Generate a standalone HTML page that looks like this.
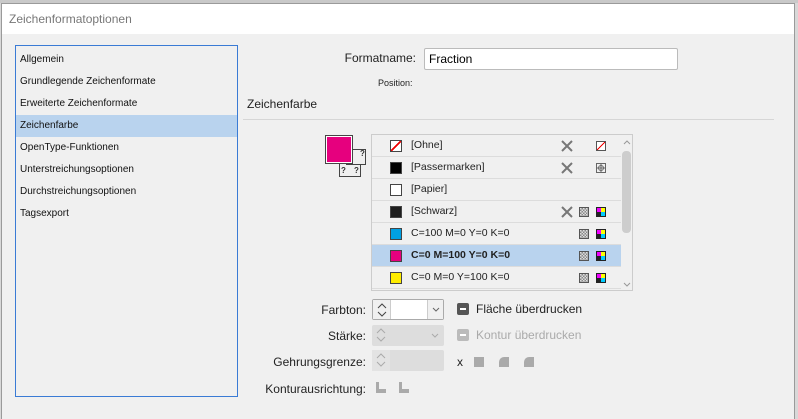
<!DOCTYPE html><html><head><style>
*{margin:0;padding:0;box-sizing:border-box}
body{width:798px;height:419px;overflow:hidden;background:#d8d8d8;font-family:"Liberation Sans",sans-serif;position:relative}
.a{position:absolute}
#dlg{left:1px;top:3px;width:794px;height:416px;background:#f0f0f0;border:1px solid #9a9a9a;border-bottom:none}
#title{left:0;top:0;width:792px;height:30px;background:#fff;color:#777;font-size:12px;padding:8px 0 0 7px}
#list{left:15px;top:45px;width:223px;height:352px;border:1px solid #3a7bd5;background:#f0f0f0}
#list div{height:22px;font-size:10px;line-height:22px;padding-left:4px;color:#111}
.lb{font-size:12px;color:#222;text-align:right}
.row{position:absolute;left:0;width:249px;height:22px;border-bottom:1px solid #dcdcdc;font-size:10.5px;line-height:21px;color:#222}
.sw{position:absolute;left:18px;top:5px;width:12px;height:12px;border:1px solid #444}
.row span{position:absolute;left:39px}
.ic{position:absolute;top:6px;width:10px;height:10px}
.g{left:207px;border:1px solid #555;background:repeating-conic-gradient(#888 0 25%,#ddd 0 50%) 0 0/3px 3px}
.c{left:224px;border:1px solid #222;background:conic-gradient(#ff0 0 25%,#0cf 0 50%,#222 0 75%,#e0f 0)}
.p{position:absolute;left:189px;top:5px;width:12px;height:12px}
.sl{background:linear-gradient(to bottom right,#fff 44%,#e00 44%,#e00 56%,#fff 56%)}
svg.ch{position:absolute}
</style></head><body>
<div class="a" style="left:0;top:0;width:798px;height:3px;background:#c9c9c9"></div>
<div id="dlg" class="a">
<div id="title" class="a">Zeichenformatoptionen</div>
</div>
<div id="list" class="a" style="padding-top:3px">
<div>Allgemein</div><div>Grundlegende Zeichenformate</div><div>Erweiterte Zeichenformate</div>
<div style="background:#b9d3ee">Zeichenfarbe</div><div>OpenType-Funktionen</div><div>Unterstreichungsoptionen</div><div>Durchstreichungsoptionen</div><div>Tagsexport</div>
</div>
<div class="a lb" style="left:300px;top:51px;width:116px">Formatname:</div>
<div class="a" style="left:424px;top:48px;width:254px;height:22px;background:#fff;border:1px solid #bbb;border-radius:2px;font-size:12px;padding:3px 4px">Fraction</div>
<div class="a" style="left:378px;top:78px;font-size:9px;color:#222">Position:</div>
<div class="a" style="left:247px;top:97px;font-size:12px;color:#222">Zeichenfarbe</div>
<div class="a" style="left:243px;top:119px;width:531px;height:1px;background:#d6d6d6"></div>
<!-- swatch -->
<div class="a" style="left:339px;top:150px;width:22px;height:27px;border:1px solid #444;background:#f0f0f0;font:bold 8px 'Liberation Sans';color:#333"><span class="a" style="left:1px;top:15px">?</span><span class="a" style="left:14px;top:15px">?</span></div>
<div class="a" style="left:346px;top:149px;width:20px;height:16px;border:1px solid #444;background:#f0f0f0;font:bold 8px 'Liberation Sans';color:#333"><span class="a" style="left:13px;top:-1px">?</span></div>
<div class="a" style="left:325px;top:135px;width:28px;height:29px;border:1px solid #444;background:#fff;padding:1px"><div style="width:24px;height:25px;background:#e6007e"></div></div>
<!-- color list -->
<div class="a" style="left:371px;top:134px;width:262px;height:157px;border:1px solid #ccc;background:#f0f0f0;overflow:hidden">
<div class="row" style="top:0"><div class="sw sl"></div><span>[Ohne]</span><svg class="p" viewBox="0 0 12 12"><path d="M1 1L11 11M11 1L1 11" stroke="#777" stroke-width="2"/></svg><div class="ic sl" style="left:224px;border:1px solid #555"></div></div>
<div class="row" style="top:22px"><div class="sw" style="background:#000"></div><span>[Passermarken]</span><svg class="p" viewBox="0 0 12 12"><path d="M1 1L11 11M11 1L1 11" stroke="#777" stroke-width="2"/></svg><svg class="ic" style="left:224px" viewBox="0 0 10 10"><rect x=".5" y=".5" width="9" height="9" fill="none" stroke="#666"/><circle cx="5" cy="5" r="2.5" fill="none" stroke="#666"/><path d="M5 1V9M1 5H9" stroke="#666"/></svg></div>
<div class="row" style="top:44px"><div class="sw" style="background:#fff"></div><span>[Papier]</span></div>
<div class="row" style="top:66px"><div class="sw" style="background:#1e1e1e"></div><span>[Schwarz]</span><svg class="p" viewBox="0 0 12 12"><path d="M1 1L11 11M11 1L1 11" stroke="#777" stroke-width="2"/></svg><div class="ic g"></div><div class="ic c"></div></div>
<div class="row" style="top:88px"><div class="sw" style="background:#00a0e3"></div><span>C=100 M=0 Y=0 K=0</span><div class="ic g"></div><div class="ic c"></div></div>
<div class="row" style="top:110px;background:#b9d3ee;font-weight:bold"><div class="sw" style="background:#e6007e"></div><span>C=0 M=100 Y=0 K=0</span><div class="ic g"></div><div class="ic c"></div></div>
<div class="row" style="top:132px"><div class="sw" style="background:#ffed00"></div><span>C=0 M=0 Y=100 K=0</span><div class="ic g"></div><div class="ic c"></div></div>
<div class="a" style="left:249px;top:0;width:12px;height:157px;background:#f0f0f0"></div>
<div class="a" style="left:250px;top:16px;width:9px;height:82px;background:#cdcdcd;border-radius:4px"></div>
<svg class="ch" style="left:251px;top:4px" width="8" height="6"><path d="M1 5L4 2L7 5" stroke="#999" fill="none"/></svg>
<svg class="ch" style="left:251px;top:147px" width="8" height="6"><path d="M1 1L4 4L7 1" stroke="#999" fill="none"/></svg>
</div>
<!-- bottom -->
<div class="a lb" style="left:250px;top:303px;width:116px">Farbton:</div>
<div class="a" style="left:372px;top:299px;width:72px;height:21px;border:1px solid #aaa;background:#fff;border-radius:2px">
<div class="a" style="left:0;top:0;width:18px;height:19px;background:#f0f0f0;border-right:1px solid #ccc"><svg class="ch" style="left:4px;top:3px" width="10" height="14"><path d="M1 5L5 1L9 5M1 9L5 13L9 9" stroke="#444" fill="none"/></svg></div>
<div class="a" style="left:54px;top:0;width:16px;height:19px;background:#f0f0f0;border-left:1px solid #ccc"><svg class="ch" style="left:4px;top:7px" width="8" height="5"><path d="M1 1L4 4L7 1" stroke="#666" fill="none"/></svg></div></div>
<div class="a" style="left:457px;top:303px;width:12px;height:12px;background:#555;border-radius:2px"><div class="a" style="left:3px;top:5px;width:6px;height:2px;background:#fff"></div></div>
<div class="a" style="left:476px;top:302px;font-size:12px;color:#222">Fläche überdrucken</div>
<div class="a lb" style="left:250px;top:329px;width:116px">Stärke:</div>
<div class="a" style="left:372px;top:325px;width:72px;height:21px;background:#ddd;border-radius:2px"><svg class="ch" style="left:4px;top:3px" width="10" height="14"><path d="M1 5L5 1L9 5M1 9L5 13L9 9" stroke="#aaa" fill="none"/></svg><svg class="ch" style="left:59px;top:8px" width="8" height="5"><path d="M1 1L4 4L7 1" stroke="#aaa" fill="none"/></svg></div>
<div class="a" style="left:457px;top:329px;width:12px;height:12px;background:#bbb;border-radius:2px"><div class="a" style="left:3px;top:5px;width:6px;height:2px;background:#fff"></div></div>
<div class="a" style="left:476px;top:328px;font-size:12px;color:#aaa">Kontur überdrucken</div>
<div class="a lb" style="left:230px;top:355px;width:136px">Gehrungsgrenze:</div>
<div class="a" style="left:372px;top:350px;width:72px;height:21px;background:#ddd;border-radius:2px"><div class="a" style="left:0;top:0;width:18px;height:21px;background:#e3e3e3"></div><svg class="ch" style="left:4px;top:3px" width="10" height="14"><path d="M1 5L5 1L9 5M1 9L5 13L9 9" stroke="#aaa" fill="none"/></svg></div>
<div class="a" style="left:457px;top:355px;font-size:12px;color:#222">x</div>
<div class="a" style="left:474px;top:357px;width:10px;height:10px;background:#aaa"></div>
<div class="a" style="left:499px;top:357px;width:10px;height:10px;background:#aaa;border-radius:5px 0 0 0"></div>
<div class="a" style="left:524px;top:357px;width:10px;height:10px;background:#aaa;border-radius:5px 0 0 0"></div>
<div class="a lb" style="left:230px;top:382px;width:136px">Konturausrichtung:</div>
<div class="a" style="left:376px;top:382px;width:10px;height:11px;border-left:3px solid #aaa;border-bottom:4px solid #aaa"></div>
<div class="a" style="left:399px;top:382px;width:10px;height:11px;border-left:3px solid #aaa;border-bottom:4px solid #aaa"></div>
</body></html>
